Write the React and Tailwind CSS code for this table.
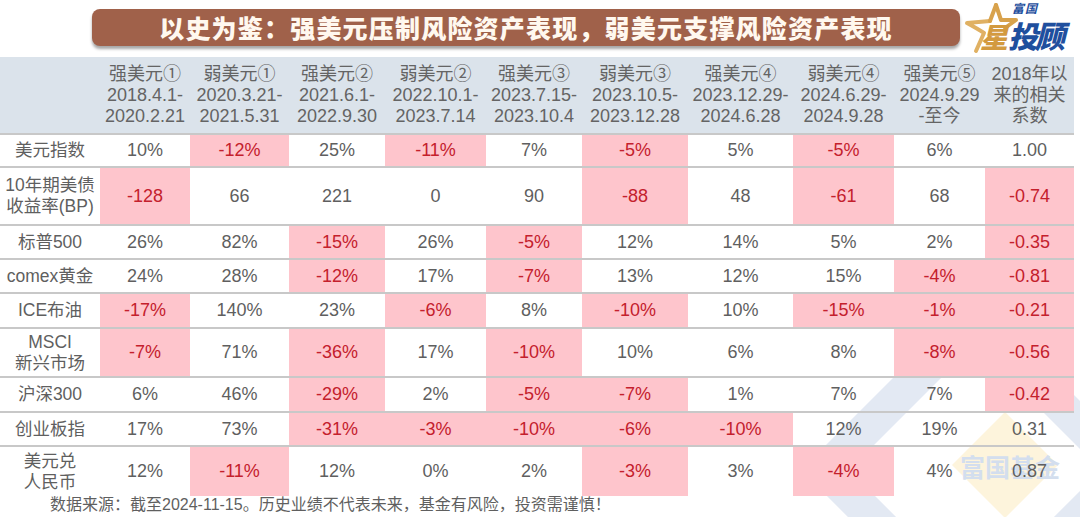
const COLS = [
  { name: '强美元①', a: '2018.4.1-', b: '2020.2.21' },
  { name: '弱美元①', a: '2020.3.21-', b: '2021.5.31' },
  { name: '强美元②', a: '2021.6.1-', b: '2022.9.30' },
  { name: '弱美元②', a: '2022.10.1-', b: '2023.7.14' },
  { name: '强美元③', a: '2023.7.15-', b: '2023.10.4' },
  { name: '弱美元③', a: '2023.10.5-', b: '2023.12.28' },
  { name: '强美元④', a: '2023.12.29-', b: '2024.6.28' },
  { name: '弱美元④', a: '2024.6.29-', b: '2024.9.28' },
  { name: '强美元⑤', a: '2024.9.29', b: '-至今' },
  { name: '2018年以', a: '来的相关', b: '系数' },
]

// value ending with * = highlighted cell
const ROWS = [
  { label: ['美元指数'], h: 'h-[33px]', cells: ['10%', '-12%*', '25%', '-11%*', '7%', '-5%*', '5%', '-5%*', '6%', '1.00'] },
  { label: ['10年期美债', '收益率(BP)'], h: 'h-[58px]', cells: ['-128*', '66', '221', '0', '90', '-88*', '48', '-61*', '68', '-0.74*'] },
  { label: ['标普500'], h: 'h-[34px]', cells: ['26%', '82%', '-15%*', '26%', '-5%*', '12%', '14%', '5%', '2%', '-0.35*'] },
  { label: ['comex黄金'], h: 'h-[34px]', cells: ['24%', '28%', '-12%*', '17%', '-7%*', '13%', '12%', '15%', '-4%*', '-0.81*'] },
  { label: ['ICE布油'], h: 'h-[35px]', cells: ['-17%*', '140%', '23%', '-6%*', '8%', '-10%*', '10%', '-15%*', '-1%*', '-0.21*'] },
  { label: ['MSCI', '新兴市场'], h: 'h-[49px]', cells: ['-7%*', '71%', '-36%*', '17%', '-10%*', '10%', '6%', '8%', '-8%*', '-0.56*'] },
  { label: ['沪深300'], h: 'h-[35px]', cells: ['6%', '46%', '-29%*', '2%', '-5%*', '-7%*', '1%', '7%', '7%', '-0.42*'] },
  { label: ['创业板指'], h: 'h-[34px]', cells: ['17%', '73%', '-31%*', '-3%*', '-10%*', '-6%*', '-10%*', '12%', '19%', '0.31'] },
  { label: ['美元兑', '人民币'], h: 'h-[49px]', last: true, cells: ['12%', '-11%*', '12%', '0%', '2%', '-3%*', '3%', '-4%*', '4%', '0.87'] },
]

const GRID = 'grid grid-cols-[100px_90px_99px_96px_101px_96px_106px_105px_101px_91px_89px]'

function Logo() {
  return (
    <div className="relative h-[54px] w-[115px]">
      <svg width="115" height="54" viewBox="0 0 115 54" className="absolute left-0 top-0">
        <path
          d="M34 4 L39 19 L54 19 L43 27"
          fill="none"
          stroke="#d8a24c"
          strokeWidth="4"
          strokeLinejoin="round"
          strokeLinecap="round"
        />
        <path
          d="M28 20 L5 22 Q16 28 22 32 L14 50"
          fill="none"
          stroke="#e0b163"
          strokeWidth="4"
          strokeLinejoin="round"
          strokeLinecap="round"
        />
        <path d="M34 4 L28 20" fill="none" stroke="#d8a24c" strokeWidth="4" strokeLinecap="round" />
      </svg>
      <span className="absolute left-[50px] top-[2px] text-[12px] font-bold italic leading-none tracking-[1px] text-[#1f4f9e]">
        富国
      </span>
      <span
        className="absolute left-[18px] top-[21px] text-[28px] font-black italic leading-none text-[#d39a3f]"
        style={{ fontFamily: '"Noto Sans CJK SC", sans-serif' }}
      >
        星
      </span>
      <span
        className="absolute left-[46px] top-[19px] text-[30px] font-black italic leading-none tracking-[-3px] text-[#1f4f9e]"
        style={{ fontFamily: '"Noto Sans CJK SC", sans-serif' }}
      >
        投顾
      </span>
    </div>
  )
}

function Watermark() {
  return (
    <svg
      width="280"
      height="217"
      viewBox="0 0 280 217"
      className="pointer-events-none absolute left-[800px] top-[300px]"
    >
      <path
        d="M175 20 L325 170 L175 320 L25 170 Z"
        fill="none"
        stroke="#e3e9f3"
        strokeWidth="34"
        strokeLinejoin="round"
      />
      <path d="M205 112 L258 165 L205 218 L152 165 Z" fill="#fdf4dc" />
      <text
        x="160"
        y="177"
        fontSize="25"
        fontWeight="700"
        fill="#d3deee"
        fontFamily="Noto Sans CJK SC, sans-serif"
      >
        富国基金
      </text>
    </svg>
  )
}

export default function App() {
  return (
    <div
      className="relative h-[517px] w-[1080px] overflow-hidden bg-white text-[#5f5f5f]"
      style={{ fontFamily: '"Liberation Sans", "Noto Sans CJK SC", sans-serif' }}
    >
      <Watermark />

      <div className="relative flex h-[57px] items-start">
        <div className="ml-[92px] mt-[9px] flex h-[37px] w-[868px] items-center justify-center rounded-[8px] bg-[#a0614a] shadow-[0_3px_3px_rgba(0,0,0,0.35)]">
          <span
            className="text-[25px] font-black leading-none tracking-[1.2px] text-[#fff8ef]"
            style={{ fontFamily: '"Noto Sans CJK SC", sans-serif' }}
          >
            以史为鉴：强美元压制风险资产表现，弱美元支撑风险资产表现
          </span>
        </div>
        <div className="ml-[2px] mt-[1px]">
          <Logo />
        </div>
      </div>

      <div className="relative w-[1074px]">
        <div className={`${GRID} h-[78px] border-b-2 border-[#c8c8c8] bg-[#dbe3eb]`}>
          <div />
          {COLS.map((c) => (
            <div
              key={c.name}
              className="flex flex-col items-center justify-center whitespace-nowrap text-[18px] leading-[21px] text-[#646464]"
            >
              <span>{c.name}</span>
              <span>{c.a}</span>
              <span>{c.b}</span>
            </div>
          ))}
        </div>

        {ROWS.map((r) => (
          <div
            key={r.label.join('')}
            className={`${GRID} ${r.h} ${r.last ? '' : 'border-b-2 border-[#c8c8c8]'}`}
          >
            <div className="flex flex-col items-center justify-center text-[17.5px] leading-[21px]">
              {r.label.map((l) => (
                <span key={l} className="whitespace-nowrap">
                  {l}
                </span>
              ))}
            </div>
            {r.cells.map((v, i) => {
              const hi = v.endsWith('*')
              return (
                <div
                  key={i}
                  className={`flex items-center justify-center text-[18px] ${hi ? 'bg-[#fec5cc] text-[#c4202c]' : ''}`}
                >
                  {hi ? v.slice(0, -1) : v}
                </div>
              )
            })}
          </div>
        ))}
      </div>

      <div className="relative ml-[50px] text-[16px] leading-[18px] text-[#5f5f5f]">
        数据来源：截至2024-11-15。历史业绩不代表未来，基金有风险，投资需谨慎！
      </div>
    </div>
  )
}
